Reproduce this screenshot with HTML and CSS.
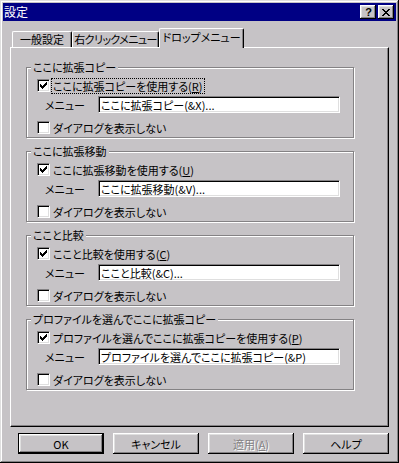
FILE: index.html
```html
<!DOCTYPE html>
<html lang="ja">
<head>
    <meta charset="UTF-8">
    <meta name="viewport" content="width=device-width, initial-scale=1.0">
    <title>設定</title>
    <link rel="stylesheet" href="styles.css">
</head>
<body>
    <div class="window">
        <!-- タイトルバー -->
        <div class="titlebar">
            <span class="title">設定</span>
            <div class="caption-buttons">
                <span class="cap-btn help">?</span>
                <span class="cap-btn close">
                    <svg width="8" height="7" viewBox="0 0 8 7"><path d="M0 0h2v1h-2zM6 0h2v1h-2zM1 1h2v1h-2zM5 1h2v1h-2zM2 2h4v1h-4zM3 3h2v1h-2zM2 4h4v1h-4zM1 5h2v1h-2zM5 5h2v1h-2zM0 6h2v1h-2zM6 6h2v1h-2z" fill="#000"/></svg>
                </span>
            </div>
        </div>

        <div class="client">
            <!-- タブ -->
            <div class="tabs">
                <div class="tab tab-general">一般設定</div>
                <div class="tab tab-right">右クリックメニュー</div>
                <div class="tab tab-drop active">ドロップメニュー</div>
            </div>

            <div class="panel">
                <div class="group">
                    <div class="group-title">ここに拡張コピー</div>
                    <label class="check-row">
                        <span class="checkbox"><svg width="7" height="7" viewBox="0 0 7 7"><path d="M6 0h1v1h-1zM5 1h2v1h-2zM0 2h1v1h-1zM4 2h3v1h-3zM0 3h2v1h-2zM3 3h3v1h-3zM0 4h5v1h-5zM1 5h3v1h-3zM2 6h1v1h-1z" fill="#000"/></svg></span>
                        <span class="check-label focus">ここに拡張コピーを使用する(<u>R</u>)</span>
                    </label>
                    <div class="menu-row">
                        <span class="menu-label">メニュー</span>
                        <input class="field" type="text" value="ここに拡張コピー(&amp;X)...">
                    </div>
                    <label class="check-row">
                        <span class="checkbox"></span>
                        <span class="check-label">ダイアログを表示しない</span>
                    </label>
                </div>

                <div class="group">
                    <div class="group-title">ここに拡張移動</div>
                    <label class="check-row">
                        <span class="checkbox"><svg width="7" height="7" viewBox="0 0 7 7"><path d="M6 0h1v1h-1zM5 1h2v1h-2zM0 2h1v1h-1zM4 2h3v1h-3zM0 3h2v1h-2zM3 3h3v1h-3zM0 4h5v1h-5zM1 5h3v1h-3zM2 6h1v1h-1z" fill="#000"/></svg></span>
                        <span class="check-label">ここに拡張移動を使用する(<u>U</u>)</span>
                    </label>
                    <div class="menu-row">
                        <span class="menu-label">メニュー</span>
                        <input class="field" type="text" value="ここに拡張移動(&amp;V)...">
                    </div>
                    <label class="check-row">
                        <span class="checkbox"></span>
                        <span class="check-label">ダイアログを表示しない</span>
                    </label>
                </div>

                <div class="group">
                    <div class="group-title">ここと比較</div>
                    <label class="check-row">
                        <span class="checkbox"><svg width="7" height="7" viewBox="0 0 7 7"><path d="M6 0h1v1h-1zM5 1h2v1h-2zM0 2h1v1h-1zM4 2h3v1h-3zM0 3h2v1h-2zM3 3h3v1h-3zM0 4h5v1h-5zM1 5h3v1h-3zM2 6h1v1h-1z" fill="#000"/></svg></span>
                        <span class="check-label">ここと比較を使用する(<u>C</u>)</span>
                    </label>
                    <div class="menu-row">
                        <span class="menu-label">メニュー</span>
                        <input class="field" type="text" value="ここと比較(&amp;C)...">
                    </div>
                    <label class="check-row">
                        <span class="checkbox"></span>
                        <span class="check-label">ダイアログを表示しない</span>
                    </label>
                </div>

                <div class="group">
                    <div class="group-title">プロファイルを選んでここに拡張コピー</div>
                    <label class="check-row">
                        <span class="checkbox"><svg width="7" height="7" viewBox="0 0 7 7"><path d="M6 0h1v1h-1zM5 1h2v1h-2zM0 2h1v1h-1zM4 2h3v1h-3zM0 3h2v1h-2zM3 3h3v1h-3zM0 4h5v1h-5zM1 5h3v1h-3zM2 6h1v1h-1z" fill="#000"/></svg></span>
                        <span class="check-label">プロファイルを選んでここに拡張コピーを使用する(<u>P</u>)</span>
                    </label>
                    <div class="menu-row">
                        <span class="menu-label">メニュー</span>
                        <input class="field" type="text" value="プロファイルを選んでここに拡張コピー(&amp;P)">
                    </div>
                    <label class="check-row">
                        <span class="checkbox"></span>
                        <span class="check-label">ダイアログを表示しない</span>
                    </label>
                </div>
            </div>

            <!-- ボタン -->
            <div class="buttons">
                <button class="btn default">OK</button>
                <button class="btn">キャンセル</button>
                <button class="btn disabled">適用(<u>A</u>)</button>
                <button class="btn">ヘルプ</button>
            </div>
        </div>
    </div>
</body>
</html>
```

FILE: styles.css
```css
/* 全体 */
* {
    box-sizing: border-box;
}

body {
    margin: 0;
    font-family: "Noto Sans CJK JP", "Liberation Sans", sans-serif;
    font-size: 11px;
    font-weight: 400;
    font-feature-settings: "palt";
    color: #000;
    background: #c6c3c6;
}

/* ウィンドウ枠 */
.window {
    width: 399px;
    height: 463px;
    padding: 3px;
    background: #c6c3c6;
    box-shadow: inset -1px -1px #000, inset 1px 1px #dfdfdf,
                inset -2px -2px #848284, inset 2px 2px #fff;
}

/* タイトルバー */
.titlebar {
    display: flex;
    align-items: center;
    justify-content: space-between;
    height: 18px;
    padding: 0 2px 0 1px;
    background: #000084;
}

.title {
    color: #fff;
    font-size: 12px;
    line-height: 14px;
}

.caption-buttons {
    display: flex;
    gap: 2px;
}

.cap-btn {
    display: flex;
    align-items: center;
    justify-content: center;
    width: 16px;
    height: 14px;
    background: #c6c3c6;
    box-shadow: inset -1px -1px #000, inset 1px 1px #fff,
                inset -2px -2px #848284, inset 2px 2px #dfdfdf;
}

.cap-btn.help {
    font-family: "Liberation Sans", sans-serif;
    font-weight: bold;
    font-size: 11px;
    line-height: 12px;
    padding-left: 1px;
}

.cap-btn.close svg {
    display: block;
    margin-left: -1px;
}

.client {
    padding: 0 7px;
}

/* タブ */
.tabs {
    position: relative;
    display: flex;
    align-items: flex-end;
    height: 19px;
    margin-top: 7px;
    padding-left: 2px;
}

.tab {
    height: 16px;
    line-height: 14px;
    text-align: center;
    background: #c6c3c6;
    border-top: 1px solid #fff;
    border-left: 1px solid #fff;
    border-right: 1px solid #000;
    border-radius: 2px 2px 0 0;
    box-shadow: inset -1px 0 #848284;
    white-space: nowrap;
}

.tab-general { width: 60px; }
.tab-right { width: 87px; letter-spacing: -0.6px; }
.tab-drop { width: 85px; }

.tab.active {
    height: 20px;
    margin-bottom: -1px;
    line-height: 16px;
}

/* タブの中身 */
.panel {
    height: 380px;
    padding: 19px 0 0 15px;
    border-style: solid;
    border-width: 1px;
    border-color: #fff #000 #000 #fff;
    box-shadow: inset -1px -1px #848284;
}

/* グループ */
.group {
    width: 328px;
    margin-bottom: 13px;
    padding: 0 0 1px 10px;
    border: 1px solid #848284;
    box-shadow: inset 1px 1px #fff, 1px 1px #fff;
}

.group-title {
    width: fit-content;
    height: 12px;
    margin: -7px 0 0 -6px;
    padding: 0 2px;
    line-height: 12px;
    background: #c6c3c6;
    white-space: nowrap;
}

.check-row {
    display: flex;
    align-items: center;
    height: 17px;
    margin-top: 4px;
}

.checkbox {
    display: flex;
    align-items: center;
    justify-content: center;
    width: 13px;
    height: 13px;
    background: #fff;
    border-style: solid;
    border-width: 1px;
    border-color: #848284 #fff #fff #848284;
    box-shadow: inset 1px 1px #000, inset -1px -1px #dfdfdf;
}

.checkbox svg {
    display: block;
}

.check-label {
    margin-left: 2px;
    padding: 0 1px;
    line-height: 14px;
    white-space: nowrap;
}

.check-label.focus {
    outline: 1px dotted #000;
}

.menu-row {
    display: flex;
    align-items: center;
    height: 17px;
    margin: 2px 0 6px;
}

.menu-row + .check-row {
    margin-top: 0;
}

.menu-label {
    width: 53px;
    margin-left: 8px;
}

.field {
    width: 242px;
    height: 17px;
    margin: 0;
    padding: 0 2px;
    font: inherit;
    font-feature-settings: "palt";
    color: #000;
    background: #fff;
    border-style: solid;
    border-width: 1px;
    border-color: #848284 #fff #fff #848284;
    box-shadow: inset 1px 1px #000, inset -1px -1px #dfdfdf;
    outline: none;
}

/* 下のボタン */
.buttons {
    display: flex;
    gap: 9px;
    margin-top: 6px;
    padding-left: 8px;
}

.btn {
    width: 86px;
    height: 21px;
    padding: 0;
    font: inherit;
    font-feature-settings: "palt";
    color: #000;
    background: #c6c3c6;
    border: none;
    box-shadow: inset -1px -1px #000, inset 1px 1px #fff,
                inset -2px -2px #848284, inset 2px 2px #dfdfdf;
}

.btn.default {
    border: 1px solid #000;
}

.btn.disabled {
    color: #848284;
    text-shadow: 1px 1px #fff;
}
```
